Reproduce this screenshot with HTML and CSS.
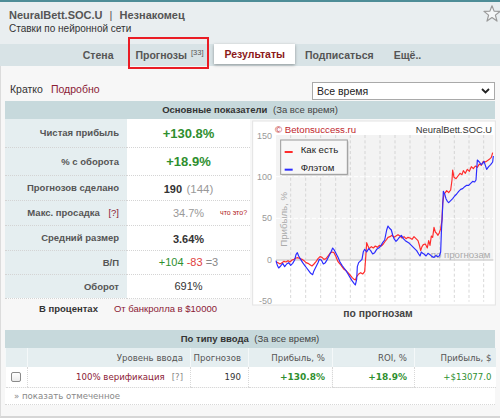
FILE: index.html
```html
<!DOCTYPE html>
<html lang="ru">
<head>
<meta charset="utf-8">
<title>NeuralBett.SOC.U</title>
<link rel="stylesheet" href="styles.css">
</head>
<body>
<header class="hdr">
  <div class="hdr-text">
    <div class="title">NeuralBett.SOC.U <span class="sep">|</span> Незнакомец</div>
    <div class="sub">Ставки по нейронной сети</div>
  </div>
  <svg class="star" viewBox="0 0 18 17" width="18" height="17"><polygon points="9,0.8 11.1,6.1 17,6.4 12.4,10.1 14,16.1 9,12.6 4,16.1 5.6,10.1 1,6.4 6.9,6.1" fill="#f4f6f7" stroke="#9a9a9a" stroke-width="1.2" stroke-linejoin="round"/></svg>
</header>
<nav class="tabs">
  <span class="tab">Стена</span>
  <span class="tab hl">Прогнозы <span class="cnt">[33]</span></span>
  <span class="tab on">Результаты</span>
  <span class="tab">Подписаться</span>
  <span class="tab">Ещё..</span>
</nav>
<main class="main">
  <div class="toolbar">
    <div class="views"><span class="cur">Кратко</span><a href="#">Подробно</a></div>
    <div class="select"><span>Все время</span><svg width="9" height="6" viewBox="0 0 9 6"><polyline points="1,1 4.5,4.5 8,1" fill="none" stroke="#222" stroke-width="1.8"/></svg></div>
  </div>
  <div class="sect"><b>Основные показатели</b> (За все время)</div>
  <div class="stats">
    <div class="stats-left">
      <table class="kv">
        <tr class="big"><td class="k">Чистая прибыль</td><td class="v"><span class="pos big-v">+130.8%</span></td></tr>
        <tr class="big"><td class="k">% с оборота</td><td class="v"><span class="pos big-v">+18.9%</span></td></tr>
        <tr class="mid"><td class="k">Прогнозов сделано</td><td class="v"><b class="num">190</b> <span class="muted">(144)</span></td></tr>
        <tr class="mid"><td class="k">Макс. просадка <span class="q">[?]</span></td><td class="v"><div class="dd"><span></span><span class="muted">34.7%</span><span class="hint">что это?</span></div></td></tr>
        <tr class="mid"><td class="k">Средний размер</td><td class="v"><b class="num">3.64%</b></td></tr>
        <tr class="sm"><td class="k">В/П</td><td class="v wl"><span class="w">+104</span> <span class="l">-83</span> <span class="d">=3</span></td></tr>
        <tr class="sm"><td class="k">Оборот</td><td class="v wl">691%</td></tr>
      </table>
      <div class="basis"><b>В процентах</b><a href="#">От банкролла в $10000</a></div>
    </div>
    <div class="chart">
      <svg width="247" height="200" viewBox="0 0 741 600">
        <rect x="8" y="3" width="728" height="552" fill="#fff" stroke="#e3e3e3" stroke-width="3"/>
        <rect x="78" y="45" width="652" height="375" fill="#f3f3f3"/>
        <g stroke="#fff" stroke-width="3" stroke-dasharray="12 6">
          <line x1="78" y1="170" x2="730" y2="170"/>
          <line x1="78" y1="295" x2="730" y2="295"/>
        </g>
        <g stroke="#cfcfcf" stroke-width="2.5" stroke-dasharray="9 7">
          <line x1="122" y1="45" x2="122" y2="545"/>
          <line x1="167" y1="45" x2="167" y2="545"/>
          <line x1="212" y1="45" x2="212" y2="545"/>
          <line x1="257" y1="45" x2="257" y2="545"/>
          <line x1="301" y1="45" x2="301" y2="545"/>
          <line x1="345" y1="45" x2="345" y2="545"/>
          <line x1="390" y1="45" x2="390" y2="545"/>
          <line x1="435" y1="45" x2="435" y2="545"/>
          <line x1="480" y1="45" x2="480" y2="545"/>
          <line x1="525" y1="45" x2="525" y2="545"/>
          <line x1="569" y1="45" x2="569" y2="545"/>
          <line x1="613" y1="45" x2="613" y2="545"/>
          <line x1="657" y1="45" x2="657" y2="545"/>
          <line x1="701" y1="45" x2="701" y2="545"/>
        </g>
        <line x1="78" y1="420" x2="730" y2="420" stroke="#d2d2d2" stroke-width="5"/>
        <g class="ylab" text-anchor="end">
          <text x="66" y="56">150</text>
          <text x="66" y="179">100</text>
          <text x="66" y="304">50</text>
          <text x="66" y="429">0</text>
          <text x="66" y="552">-50</text>
        </g>
        <text class="copy" x="75" y="38">© Betonsuccess.ru</text>
        <text class="cname" x="726" y="38" text-anchor="end">NeuralBett.SOC.U</text>
        <text class="axis" transform="translate(110,298) rotate(-90)" text-anchor="middle">Прибыль, %</text>
        <text class="axis" x="542" y="413">по прогнозам</text>
        <polyline fill="none" stroke="#ff2b2b" stroke-width="3.5" stroke-linejoin="round" points="78,425 84,428 90,432 96,428 102,424 108,426 114,422 120,426 126,420 132,418 138,414 144,413 150,416 156,418 162,422 168,428 174,430 180,434 186,438 192,432 198,425 204,416 210,410 216,412 222,418 228,416 234,408 240,400 246,396 252,398 258,410 264,425 270,432 276,440 282,448 288,452 294,458 300,465 306,472 312,478 316,480 320,470 326,462 332,458 338,462 344,455 348,400 350,368 354,378 358,386 364,380 370,384 376,378 382,382 388,376 394,378 400,372 404,366 410,358 414,352 420,350 426,346 432,352 438,348 444,344 450,348 456,354 462,350 468,356 474,352 480,354 486,358 492,350 498,356 504,362 508,375 512,392 516,380 520,374 526,372 532,384 536,362 540,376 544,348 548,352 552,322 556,336 560,340 564,346 568,338 572,326 576,300 578,250 582,222 586,218 590,212 596,218 602,210 606,180 608,150 612,172 618,176 624,168 630,160 636,164 640,152 646,160 652,148 658,154 664,140 670,146 676,138 682,142 688,132 694,136 700,124 706,126 712,122 718,118 724,112 728,98"/>
        <polyline fill="none" stroke="#2b2bff" stroke-width="3.5" stroke-linejoin="round" points="78,422 82,436 86,444 92,438 98,430 104,440 110,432 116,428 122,436 128,430 134,420 138,404 142,398 146,408 152,418 158,428 164,436 170,444 176,452 182,460 188,464 192,452 198,440 204,428 208,418 214,420 220,432 226,428 232,418 238,406 244,394 248,384 254,392 260,404 264,412 270,426 276,436 282,444 288,452 294,462 300,472 306,482 312,490 316,495 320,478 322,440 326,428 330,424 336,418 340,395 344,388 350,396 356,386 362,392 368,402 374,398 380,388 386,384 392,378 398,368 404,360 410,330 414,318 418,324 424,330 428,345 432,356 438,364 442,360 448,352 454,346 460,356 466,362 472,366 478,370 484,376 490,382 496,388 500,392 506,402 510,408 514,396 518,400 522,402 528,408 534,400 540,404 546,410 552,412 558,406 562,410 568,408 572,396 574,340 578,262 580,214 584,222 588,236 592,244 596,248 602,242 608,236 614,228 620,222 626,214 632,208 638,206 644,200 650,196 656,196 662,190 668,184 674,186 678,180 680,150 682,120 688,126 694,134 698,130 702,124 706,136 710,148 716,140 722,134 728,126 730,108"/>
        <rect x="96" y="64" width="200" height="103" fill="#d0d0d0"/>
        <rect x="92" y="60" width="200" height="103" fill="#f7f7f7" stroke="#9a9a9a" stroke-width="3"/>
        <line x1="104" y1="96" x2="128" y2="96" stroke="#ff2b2b" stroke-width="6"/>
        <line x1="104" y1="149" x2="128" y2="149" stroke="#2b2bff" stroke-width="6"/>
        <text class="leg" x="152" y="100">Как есть</text>
        <text class="leg" x="152" y="153">Флэтом</text>
        <text class="foot" x="384" y="592" text-anchor="middle">по прогнозам</text>
      </svg>
    </div>
  </div>
  <div class="sect sect2"><b>По типу ввода</b> (За все время)</div>
  <table class="types">
    <colgroup><col class="c1"><col class="c2"><col class="c3"><col class="c4"><col class="c5"><col class="c6"></colgroup>
    <tr><th></th><th>Уровень ввода</th><th>Прогнозов</th><th>Прибыль, %</th><th>ROI, %</th><th>Прибыль, $</th></tr>
    <tr><td class="cbc"><span class="cb"></span></td><td><span class="lvl">100% верификация</span><span class="qq">[?]</span></td><td>190</td><td class="g"><b>+130.8%</b></td><td class="g roi"><b>+18.9%</b></td><td class="g">+$13077.0</td></tr>
  </table>
  <div class="show">» показать отмеченное</div>
</main>
</body>
</html>
```
FILE: styles.css
```css
* { box-sizing: border-box; }
html, body { margin: 0; padding: 0; }
body {
  width: 500px;
  height: 418px;
  overflow: hidden;
  font-family: "Liberation Sans", Arial, sans-serif;
  color: #333;
  background: #fff;
}
.hdr {
  display: flex;
  justify-content: space-between;
  height: 44px;
  border-top: 2px solid #4e8d97;
  background: #e9eef0;
  padding: 6px 0 0 9px;
}
.title { font-size: 11px; font-weight: bold; color: #555; line-height: 14px; }
.title .sep { font-weight: normal; margin: 0 4px; }
.sub { font-size: 10px; line-height: 14px; color: #333; }
.star { margin-top: -3px; margin-right: -1px; }

.tabs {
  display: flex;
  justify-content: center;
  align-items: flex-start;
  height: 22px;
  background: #d8e3e6;
  padding-left: 4px;
}
.tab {
  padding: 0 10px;
  font-size: 10.5px;
  font-weight: bold;
  color: #555;
  line-height: 22px;
  height: 22px;
  white-space: nowrap;
}
.tab .cnt { font-size: 7.5px; font-weight: normal; vertical-align: 4px; line-height: 0; margin-left: 1px; }
.tab.on {
  background: #fff;
  color: #8b1a1a;
  height: 20px;
  line-height: 20px;
  box-shadow: 0 1px 3px rgba(0,0,0,0.35);
}
.tab.hl { position: relative; padding-left: 12px; padding-right: 11px; }
.tab.hl::after {
  content: "";
  position: absolute;
  left: 4px; right: 5px; top: -7px; bottom: -3px;
  border: 2px solid #ea1c24;
}

.main {
  height: 352px;
  background: #f7f7f7;
  border-left: 1px solid #dcdcdc;
  border-bottom: 2px solid #d6d6d6;
  padding: 16px 5px 0 4px;
}
.toolbar { display: flex; justify-content: space-between; height: 18px; }
.views { display: flex; gap: 8px; padding-left: 5px; font-size: 10.5px; line-height: 14px; }
.views .cur { color: #333; }
.views a { color: #8b2035; text-decoration: none; }
.select {
  width: 183px;
  height: 18px;
  border: 1px solid #a9a9a9;
  background: #fff;
  display: flex;
  align-items: center;
  justify-content: space-between;
  padding: 0 4px;
  font-size: 10.5px;
  color: #222;
}

.sect {
  margin-top: 1px;
  height: 18px;
  line-height: 18px;
  background: #c7d9dc;
  text-align: center;
  font-size: 9.5px;
  color: #444;
}
.sect b { color: #333; margin-right: 3px; }
.sect2 { margin-top: 10px; }

.stats { display: flex; height: 201px; }
.stats-left { width: 245px; }
.kv { width: 245px; border-collapse: collapse; background: #fff; }
.kv td { padding: 0; border-bottom: 1px dotted #d4d4d4; }
.kv tr.big td { height: 28px; }
.kv tr.mid td { height: 25px; }
.kv tr.sm td { height: 24px; }
.kv td.k {
  width: 122px;
  background: #e5eef0;
  text-align: right;
  padding-right: 8px;
  font-size: 9.5px;
  font-weight: bold;
  color: #555;
}
.kv .q { color: #8b2035; font-weight: normal; margin-left: 6px; }
.kv td.v { text-align: center; color: #333; }
.pos { color: #2f8f2f; }
.big-v { font-size: 13px; font-weight: bold; }
.num { font-size: 11px; }
.muted { color: #999; font-size: 11.5px; }
.dd { display: grid; grid-template-columns: 1fr auto 1fr; align-items: center; }
.dd .muted { font-size: 11px; }
.hint { font-size: 7px; color: #b02020; text-align: left; margin-left: 16px; white-space: nowrap; }
.wl { font-size: 11px; color: #555; }
.w { color: #2f8f2f; }
.l { color: #e04040; }
.d { color: #888; }
.basis {
  display: flex;
  gap: 16px;
  height: 20px;
  align-items: center;
  padding-left: 34px;
  font-size: 9.5px;
}
.basis b { color: #333; }
.basis a { color: #8b2035; text-decoration: none; }
.chart { width: 245px; padding-top: 1px; }
.chart svg { display: block; overflow: visible; }
.ylab text { font-size: 27px; fill: #999; }
.copy { font-size: 29px; fill: #c0272d; }
.cname { font-size: 28px; fill: #333; }
.axis { font-size: 29px; fill: #aaa; }
.leg { font-size: 29px; fill: #222; }
.foot { font-size: 31px; font-weight: bold; fill: #444; }

.types {
  width: 490px;
  border-collapse: collapse;
  table-layout: fixed;
  font-family: "DejaVu Sans", Verdana, sans-serif;
  font-size: 8.6px;
}
.types .c1 { width: 22px; }
.types .c2 { width: 163px; }
.types .c3 { width: 58px; }
.types .c4 { width: 84px; }
.types .c5 { width: 82px; }
.types .c6 { width: 81px; }
.types th {
  height: 19px;
  background: #e5eef0;
  font-weight: normal;
  color: #555;
  text-align: right;
  padding: 0 7px 0 0;
  border-left: 1px solid #f4f8f9;
}
.types th:last-child, .types td:last-child { padding-right: 4px; }
.types td {
  height: 20px;
  background: #fff;
  text-align: right;
  padding: 0 7px 0 0;
  color: #333;
  border-left: 1px dotted #d8d8d8;
  border-bottom: 1px dotted #d8d8d8;
}
.types td.cbc { text-align: center; padding: 0; border-left: none; }
.cb {
  display: inline-block;
  width: 10px;
  height: 10px;
  border: 1px solid #8a8a8a;
  border-radius: 2px;
  background: linear-gradient(#fff, #ececec);
  vertical-align: middle;
}
.lvl { color: #8b2035; }
.qq { color: #888; margin-left: 7px; }
.types td.g { color: #2f8f2f; }
.types td.g b { font-size: 9px; }
.types td.roi { box-shadow: 0 1px 2px rgba(0,0,0,0.12); }
.show {
  height: 17px;
  line-height: 17px;
  background: #fff;
  padding-left: 9px;
  font-family: "DejaVu Sans", Verdana, sans-serif;
  font-size: 8.6px;
  color: #888;
  border-bottom: 1px dotted #d8d8d8;
}
```
